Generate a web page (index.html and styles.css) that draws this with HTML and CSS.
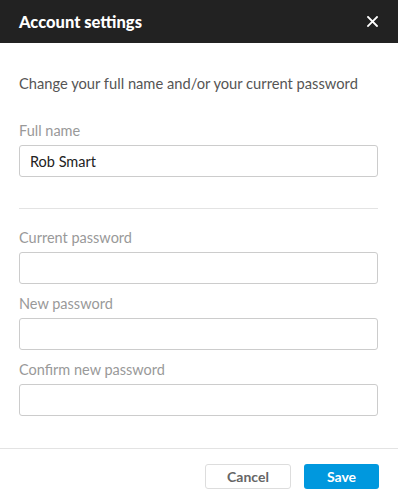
FILE: index.html
```html
<!DOCTYPE html>
<html lang="en">
<head>
    <meta charset="UTF-8">
    <meta name="viewport" content="width=device-width, initial-scale=1.0">
    <title>Account settings</title>
    <link rel="stylesheet" href="styles.css">
</head>
<body>

    <div class="modal">
        <div class="modal-header">
            <h1>Account settings</h1>
            <button type="button" class="close-button" aria-label="Close">
                <svg width="11" height="11" viewBox="0 0 11 11">
                    <path d="M1 1L10 10M10 1L1 10" stroke="#fff" stroke-width="1.8" stroke-linecap="square"/>
                </svg>
            </button>
        </div>

        <div class="modal-body">
            <p class="intro">Change your full name and/or your current password</p>

            <div class="form-group">
                <label for="fullName">Full name</label>
                <input type="text" id="fullName" name="fullName" value="Rob Smart">
            </div>

            <hr class="divider">

            <div class="form-group">
                <label for="currentPassword">Current password</label>
                <input type="password" id="currentPassword" name="currentPassword">
            </div>
            <div class="form-group">
                <label for="newPassword">New password</label>
                <input type="password" id="newPassword" name="newPassword">
            </div>
            <div class="form-group">
                <label for="confirmPassword">Confirm new password</label>
                <input type="password" id="confirmPassword" name="confirmPassword">
            </div>
        </div>

        <div class="modal-footer">
            <button type="button" class="btn btn-cancel">Cancel</button>
            <button type="button" class="btn btn-save">Save</button>
        </div>
    </div>

</body>
</html>
```

FILE: styles.css
```css
body {
    font-family: Lato, "Open Sans", sans-serif;
    margin: 0;
    padding: 0;
    background-color: #fff;
}

.modal {
    width: 398px;
}

.modal-header {
    display: flex;
    justify-content: space-between;
    align-items: center;
    height: 43px;
    padding: 0 19px;
    background-color: #222;
}

.modal-header h1 {
    margin: 0;
    color: #fff;
    font-size: 16.5px;
    font-weight: 900;
}

.close-button {
    display: flex;
    background: none;
    border: none;
    padding: 0;
    margin-right: 1px;
    cursor: pointer;
}

.modal-body {
    padding: 30px 20px 32px 19px;
}

.intro {
    margin: 0 0 28px;
    font-size: 14.7px;
    line-height: 20px;
    color: #555;
}

.form-group {
    margin-bottom: 10px;
}

.form-group:last-child {
    margin-bottom: 0;
}

.form-group label {
    display: block;
    margin-bottom: 4px;
    font-size: 14.5px;
    line-height: 20px;
    color: #999;
}

.form-group input {
    display: block;
    box-sizing: border-box;
    width: 100%;
    height: 32px;
    padding: 0 10px;
    font-family: inherit;
    font-size: 14.5px;
    color: #222;
    border: 1px solid #ccc;
    border-radius: 3px;
}

.divider {
    border: none;
    border-top: 1px solid #e3e3e3;
    margin: 31px 0 19px;
}

.modal-footer {
    display: flex;
    justify-content: flex-end;
    gap: 13px;
    padding: 15px 19px 14px;
    border-top: 1px solid #e3e3e3;
}

.btn {
    height: 25px;
    font-family: inherit;
    font-size: 14px;
    font-weight: bold;
    border-radius: 3px;
    cursor: pointer;
}

.btn-cancel {
    width: 86px;
    background-color: #fff;
    color: #666;
    border: 1px solid #ddd;
}

.btn-save {
    width: 75px;
    background-color: #0098de;
    color: #fff;
    border: none;
}
```
